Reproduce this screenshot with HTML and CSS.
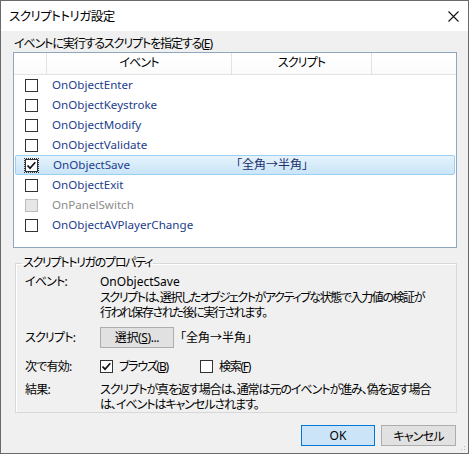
FILE: index.html
```html
<!DOCTYPE html>
<html lang="ja">
<head>
<meta charset="utf-8">
<link rel="stylesheet" href="styles.css">
</head>
<body>
<div class="window">
  <div class="titlebar">
    <span class="title">スクリプトトリガ設定</span>
    <svg class="close" width="11" height="11" viewBox="0 0 11 11"><path d="M0.5 0.5 L10.5 10.5 M10.5 0.5 L0.5 10.5" stroke="#111" stroke-width="1.1" fill="none"/></svg>
  </div>
  <div class="content">
    <div class="caption">イベントに実行するスクリプトを指定する(<u>E</u>)</div>
    <div class="list">
      <div class="header">
        <div class="hc c1"></div>
        <div class="hc c2">イベント</div>
        <div class="hc c3">スクリプト</div>
        <div class="hc c4"></div>
      </div>
      <div class="row"><div class="c1"><span class="cb"></span></div><div class="c2 ev">OnObjectEnter</div></div>
      <div class="row"><div class="c1"><span class="cb"></span></div><div class="c2 ev">OnObjectKeystroke</div></div>
      <div class="row"><div class="c1"><span class="cb"></span></div><div class="c2 ev">OnObjectModify</div></div>
      <div class="row"><div class="c1"><span class="cb"></span></div><div class="c2 ev">OnObjectValidate</div></div>
      <div class="row selected"><div class="c1"><span class="cb checked focus"><svg width="13" height="13" viewBox="0 0 13 13"><path d="M2.5 6.5 L5 9.2 L10.3 3.2" stroke="#111" stroke-width="1.7" fill="none"/></svg></span></div><div class="c2 ev">OnObjectSave</div><div class="c3 sc">「全角→半角」</div></div>
      <div class="row"><div class="c1"><span class="cb"></span></div><div class="c2 ev">OnObjectExit</div></div>
      <div class="row"><div class="c1"><span class="cb disabled"></span></div><div class="c2 ev dis">OnPanelSwitch</div></div>
      <div class="row"><div class="c1"><span class="cb"></span></div><div class="c2 ev">OnObjectAVPlayerChange</div></div>
    </div>
    <fieldset class="group">
      <legend>スクリプトトリガのプロパティ</legend>
      <div class="prow r-event">
        <div class="plabel">イベント:</div>
        <div class="pval"><span class="lat">OnObjectSave</span><br><span class="jp">スクリプトは、選択したオブジェクトがアクティブな状態で入力値の検証が</span><br><span class="jp">行われ保存された後に実行されます。</span></div>
      </div>
      <div class="prow r-script">
        <div class="plabel">スクリプト:</div>
        <div class="pval inline">
          <span class="btn sel">選択(<u>S</u>)...</span>
          <span class="scname">「全角→半角」</span>
        </div>
      </div>
      <div class="prow r-enable">
        <div class="plabel">次で有効:</div>
        <div class="pval inline">
          <span class="chk"><span class="cb checked"><svg width="13" height="13" viewBox="0 0 13 13"><path d="M2.5 6.5 L5 9.2 L10.3 3.2" stroke="#111" stroke-width="1.7" fill="none"/></svg></span><span class="chktxt">ブラウズ(<u>B</u>)</span></span>
          <span class="chk chk2"><span class="cb"></span><span class="chktxt">検索(<u>F</u>)</span></span>
        </div>
      </div>
      <div class="prow r-result">
        <div class="plabel">結果:</div>
        <div class="pval"><span class="jp jp2">スクリプトが真を返す場合は、通常は元のイベントが進み、偽を返す場合</span><br><span class="jp jp2">は、イベントはキャンセルされます。</span></div>
      </div>
    </fieldset>
    <div class="buttons">
      <span class="btn ok">OK</span>
      <span class="btn cancel">キャンセル</span>
    </div>
  </div>
  <div class="grip"></div>
</div>
</body>
</html>
```
FILE: styles.css
```css
html, body {
  margin: 0;
  padding: 0;
  background: #f0f0f0;
}
body {
  font-family: "Noto Sans", "Noto Sans CJK JP", sans-serif;
  font-size: 12px;
  color: #000;
  font-feature-settings: "palt";
}
.window {
  position: relative;
  width: 469px;
  height: 454px;
  box-sizing: border-box;
  border: 1px solid #6a6a6a;
  background: #f0f0f0;
  display: flex;
  flex-direction: column;
}
.titlebar {
  height: 30px;
  flex: none;
  background: #fff;
  display: flex;
  align-items: center;
  justify-content: space-between;
  padding: 0 9px 0 8px;
}
.title {
  font-size: 12.5px;
  margin-top: -1px;
  letter-spacing: -0.5px;
}
.close {
  display: block;
}
.content {
  padding: 5px 11px 0 12px;
  display: flex;
  flex-direction: column;
}
.caption {
  height: 16px;
  line-height: 16px;
  padding-left: 1px;
  letter-spacing: -1.1px;
}
.list {
  margin-top: 0;
  height: 196px;
  flex: none;
  box-sizing: border-box;
  border: 1px solid #8fa6be;
  background: #fff;
}
.header {
  display: flex;
  height: 22px;
  border-bottom: 1px solid #e3e3e3;
  box-sizing: border-box;
  background: linear-gradient(#fff, #fbfbfb);
}
.hc {
  line-height: 20px;
  text-align: center;
  border-right: 1px solid #e3e3e3;
  box-sizing: border-box;
  letter-spacing: -0.9px;
}
.c1 { width: 33px; flex: none; }
.c2 { width: 185px; flex: none; }
.c3 { width: 140px; flex: none; }
.c4 { flex: 1; border-right: none; }
.row {
  display: flex;
  height: 20px;
  align-items: center;
  box-sizing: border-box;
  margin: 0 1px;
}
.row .c1 { width: 32px; display: flex; align-items: center; padding-left: 10px; box-sizing: border-box; }
.row .c2 { padding-left: 5px; box-sizing: border-box; }
.row .c3 { padding-left: 3px; box-sizing: border-box; }
.ev {
  color: #22408c;
  line-height: 20px;
  font-size: 11.6px;
}
.ev.dis { color: #8c8c8c; }
.sc { color: #1b2f6e; line-height: 20px; }
.row.selected {
  background: linear-gradient(#e6f3fc, #c9e5f8);
  border: 1px solid #9ccff0;
  border-radius: 2px;
}
.row.selected .c1 { padding-left: 9px; }
.row.selected .c2 { padding-left: 5px; }
.cb {
  width: 13px;
  height: 13px;
  box-sizing: border-box;
  border: 1px solid #333;
  background: #fff;
  display: inline-block;
  position: relative;
  flex: none;
}
.cb svg {
  position: absolute;
  left: -1px;
  top: -1px;
}
.cb.disabled {
  border-color: #bcbcbc;
  background: #e6e6e6;
}
.cb.focus {
  outline: 1px dotted #333;
  outline-offset: 0;
}
.group {
  margin: 8px 0 0 2px;
  width: 442px;
  height: 157px;
  flex: none;
  box-sizing: border-box;
  border: 1px solid #d8d8d8;
  box-shadow: inset 1px 1px 0 #fff;
  padding: 0 0 0 9px;
  min-width: 0;
}
.group legend {
  padding: 0 1px;
  margin-left: -3px;
  line-height: 14px;
  letter-spacing: -1.3px;
}
.prow {
  display: flex;
}
.plabel {
  width: 75px;
  flex: none;
  line-height: 16px;
  white-space: nowrap;
  letter-spacing: -0.8px;
}
.pval {
  line-height: 15.5px;
  white-space: nowrap;
}
.jp {
  letter-spacing: -1.4px;
}
.jp.jp2 {
  letter-spacing: -1.05px;
}
.r-event { margin-top: 4px; }
.r-script {
  margin-top: 6px;
  align-items: center;
  height: 22px;
}
.inline {
  display: flex;
  align-items: center;
}
.btn {
  display: inline-flex;
  align-items: center;
  justify-content: center;
  box-sizing: border-box;
  border: 1px solid #adadad;
  background: #e1e1e1;
  height: 21px;
  white-space: nowrap;
}
.sel {
  width: 74px;
  letter-spacing: -0.4px;
}
.scname {
  margin-left: 6px;
}
.r-enable {
  margin-top: 10px;
  align-items: center;
}
.chk {
  display: inline-flex;
  align-items: center;
  width: 100px;
}
.chktxt {
  letter-spacing: -1.3px;
}
.chk .cb {
  margin-right: 6px;
}
.r-result {
  margin-top: 7px;
}
.buttons {
  display: flex;
  justify-content: flex-end;
  gap: 6px;
  margin-top: 12px;
  padding-right: 1px;
}
.ok {
  width: 74px;
  height: 21px;
  background: #cce4f7;
  border-color: #0078d7;
}
.cancel {
  width: 75px;
  height: 21px;
  letter-spacing: -0.8px;
}
.grip {
  position: absolute;
  right: 1px;
  bottom: 1px;
  width: 10px;
  height: 10px;
  background-image: radial-gradient(circle, #b9b9b9 0.8px, transparent 1px);
  background-size: 3px 3px;
  clip-path: polygon(100% 0, 100% 100%, 0 100%);
}
```
